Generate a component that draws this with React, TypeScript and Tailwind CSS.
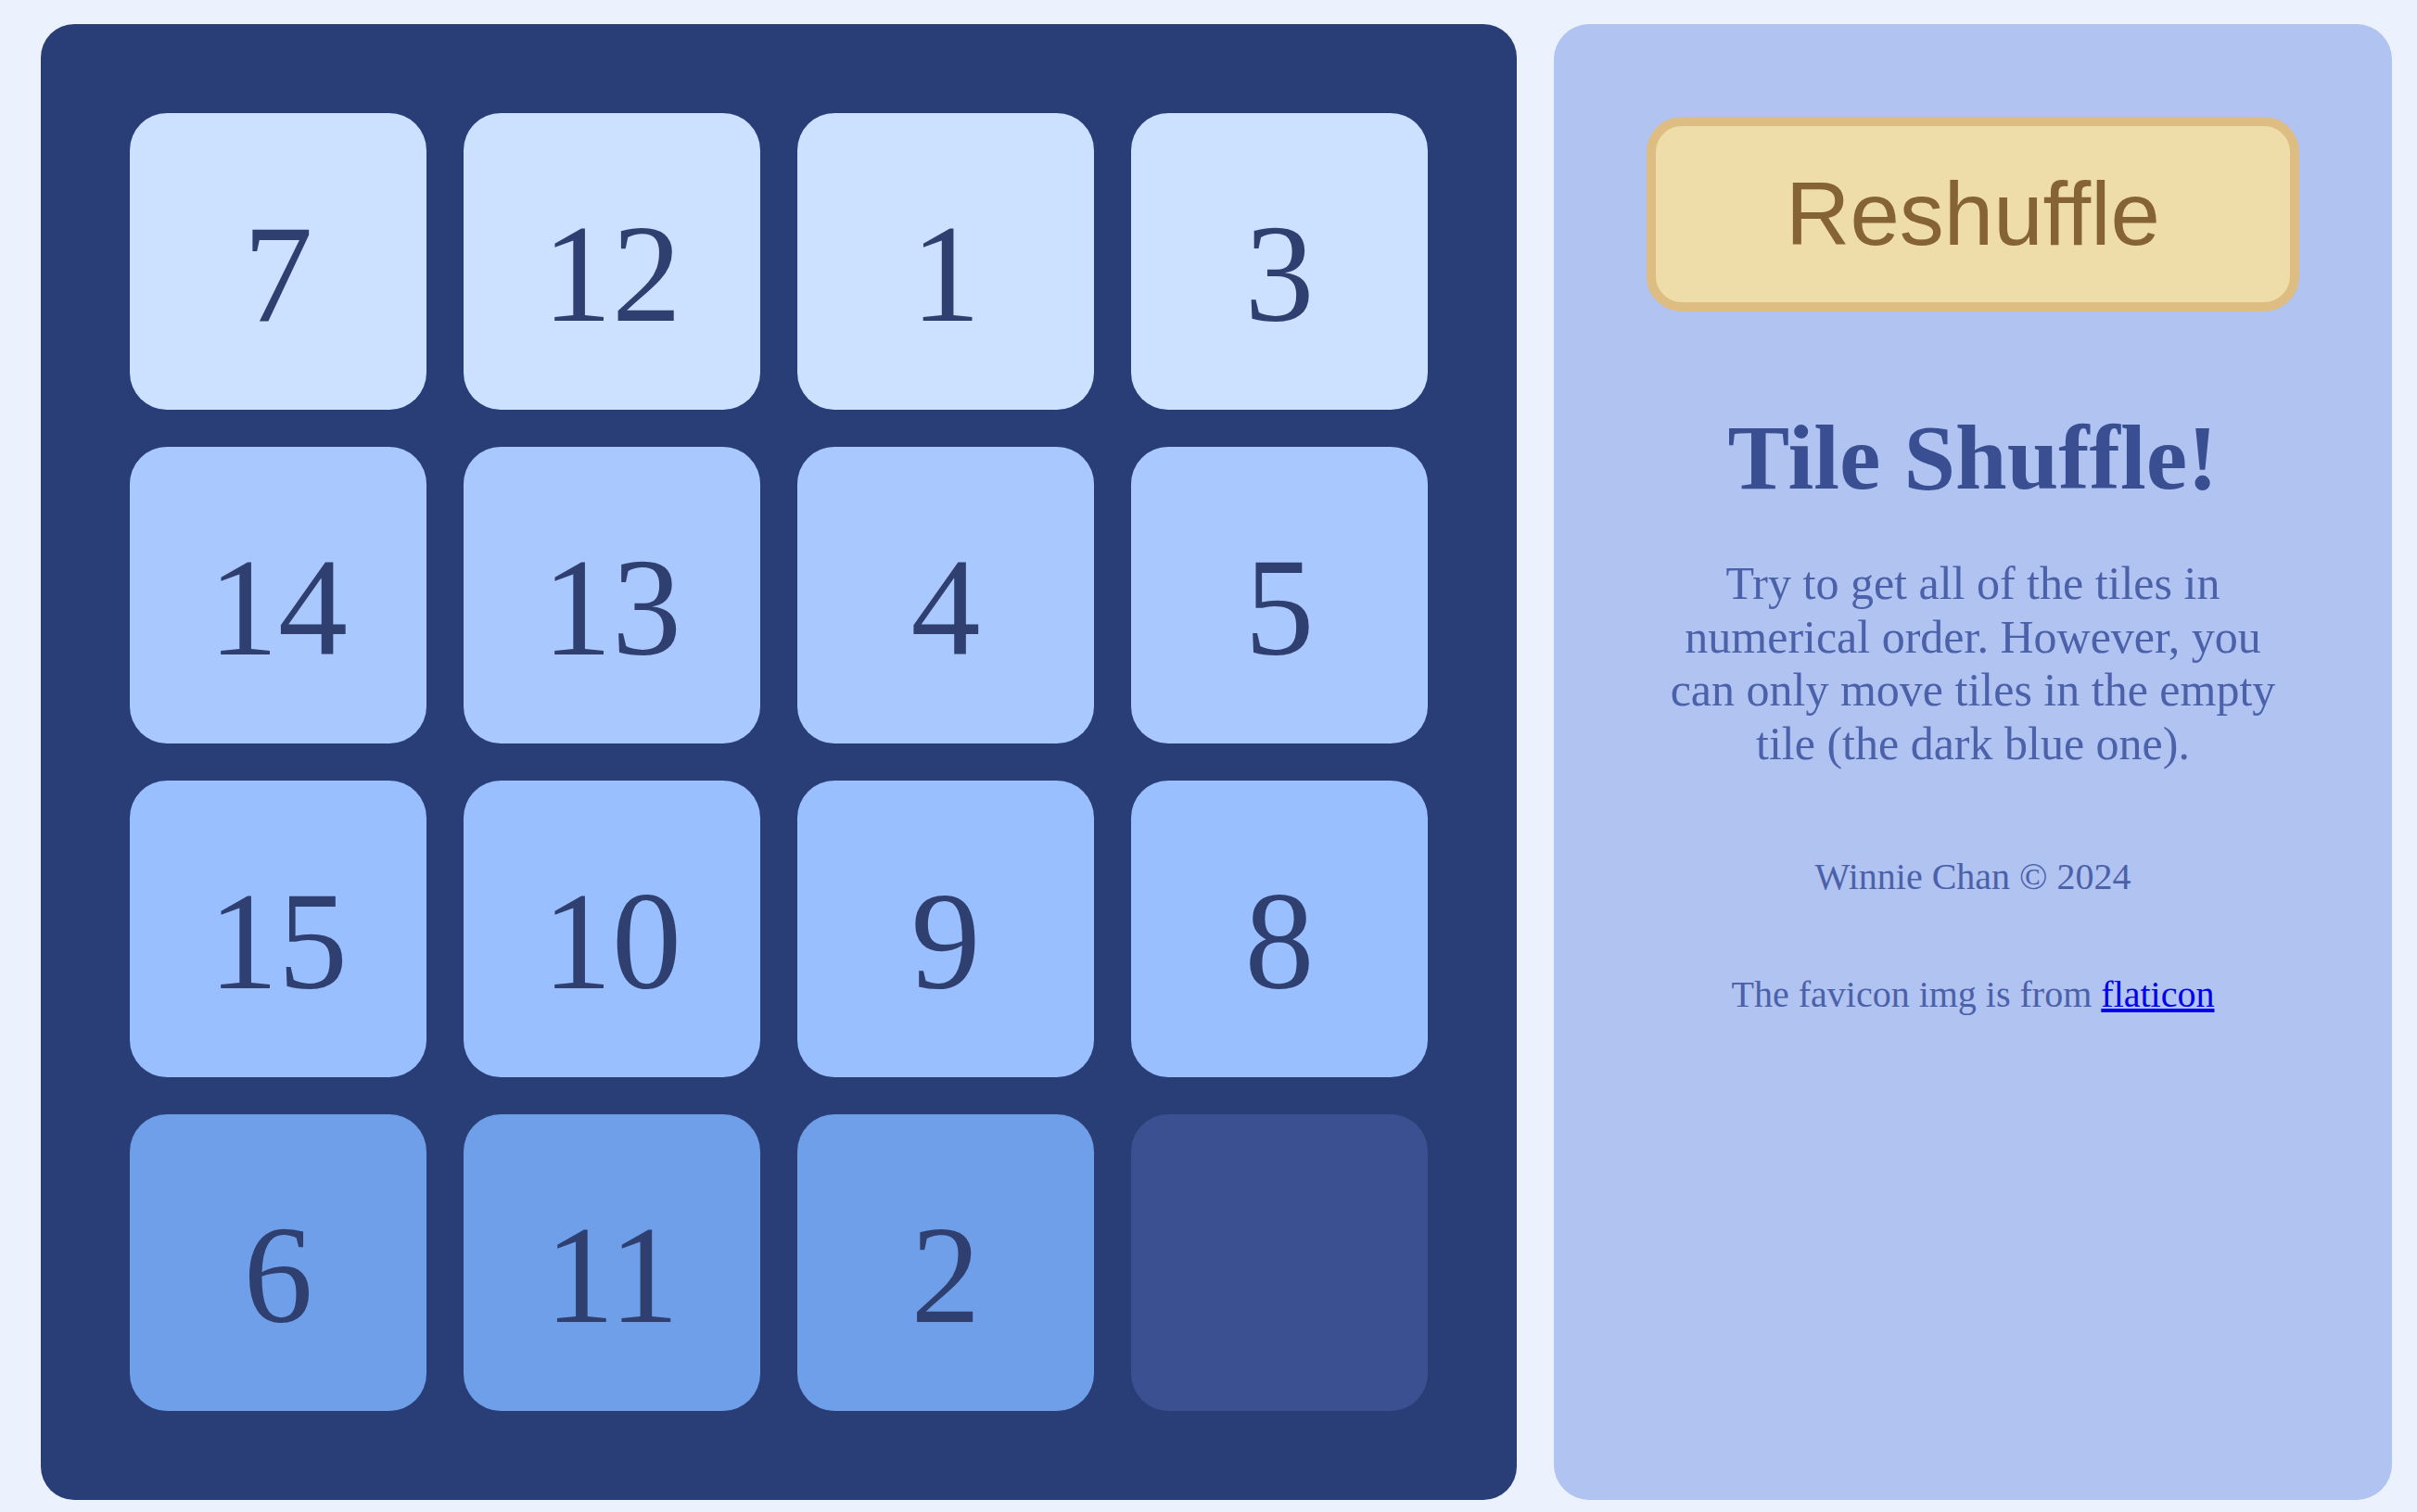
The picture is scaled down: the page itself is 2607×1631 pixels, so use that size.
import React from "react";

const rows: { n: number | null }[][] = [
  [{ n: 7 }, { n: 12 }, { n: 1 }, { n: 3 }],
  [{ n: 14 }, { n: 13 }, { n: 4 }, { n: 5 }],
  [{ n: 15 }, { n: 10 }, { n: 9 }, { n: 8 }],
  [{ n: 6 }, { n: 11 }, { n: 2 }, { n: null }],
];

const rowColors = ["bg-[#cce0ff]", "bg-[#a8c8fe]", "bg-[#99bffe]", "bg-[#6f9fe9]"];

export default function App() {
  return (
    <div
      className="w-[2607px] h-[1631px] bg-[#ebf2fe] flex gap-[40px] pt-[26px] pl-[44px] pr-[27px]"
      style={{ fontFamily: '"Liberation Serif", "Times New Roman", serif' }}
    >
      <div className="w-[1592px] h-[1592px] shrink-0 rounded-[36px] bg-[#293e76] p-[96px] grid grid-cols-4 grid-rows-4 gap-[40px]">
        {rows.map((row, r) =>
          row.map((t, c) =>
            t.n === null ? (
              <div key={`${r}-${c}`} className="w-[320px] h-[320px] rounded-[40px] bg-[#3a5091]" />
            ) : (
              <div
                key={`${r}-${c}`}
                className={`w-[320px] h-[320px] rounded-[40px] ${rowColors[r]} flex items-center justify-center pt-[26px] text-[150px] leading-none text-[#2f3f70]`}
              >
                {t.n}
              </div>
            )
          )
        )}
      </div>

      <div className="flex-1 h-[1592px] rounded-[38px] bg-[#b1c3f0] flex flex-col items-center pt-[100px] px-[100px] text-center">
        <button
          className="w-[704px] h-[210px] shrink-0 rounded-[38px] border-[10px] border-[#ddbd82] bg-[#eedda8] text-[#856334] text-[96px] leading-none flex items-center justify-center"
          style={{ fontFamily: '"Liberation Sans", Arial, sans-serif' }}
        >
          Reshuffle
        </button>
        <h1 className="mt-[100px] text-[100px] leading-[115px] font-bold text-[#3a4f92]">Tile Shuffle!</h1>
        <p className="mt-[50px] w-[680px] text-[50px] leading-[57.5px] text-[#4b61aa]">
          Try to get all of the tiles in numerical order. However, you can only move tiles in the empty tile (the dark blue one).
        </p>
        <p className="mt-[92px] text-[40px] leading-[46px] text-[#4b61aa]">Winnie Chan © 2024</p>
        <p className="mt-[81px] text-[40px] leading-[46px] text-[#4b61aa]">
          The favicon img is from{" "}
          <a href="#" className="text-[#0000ee] underline">
            flaticon
          </a>
        </p>
      </div>
    </div>
  );
}
